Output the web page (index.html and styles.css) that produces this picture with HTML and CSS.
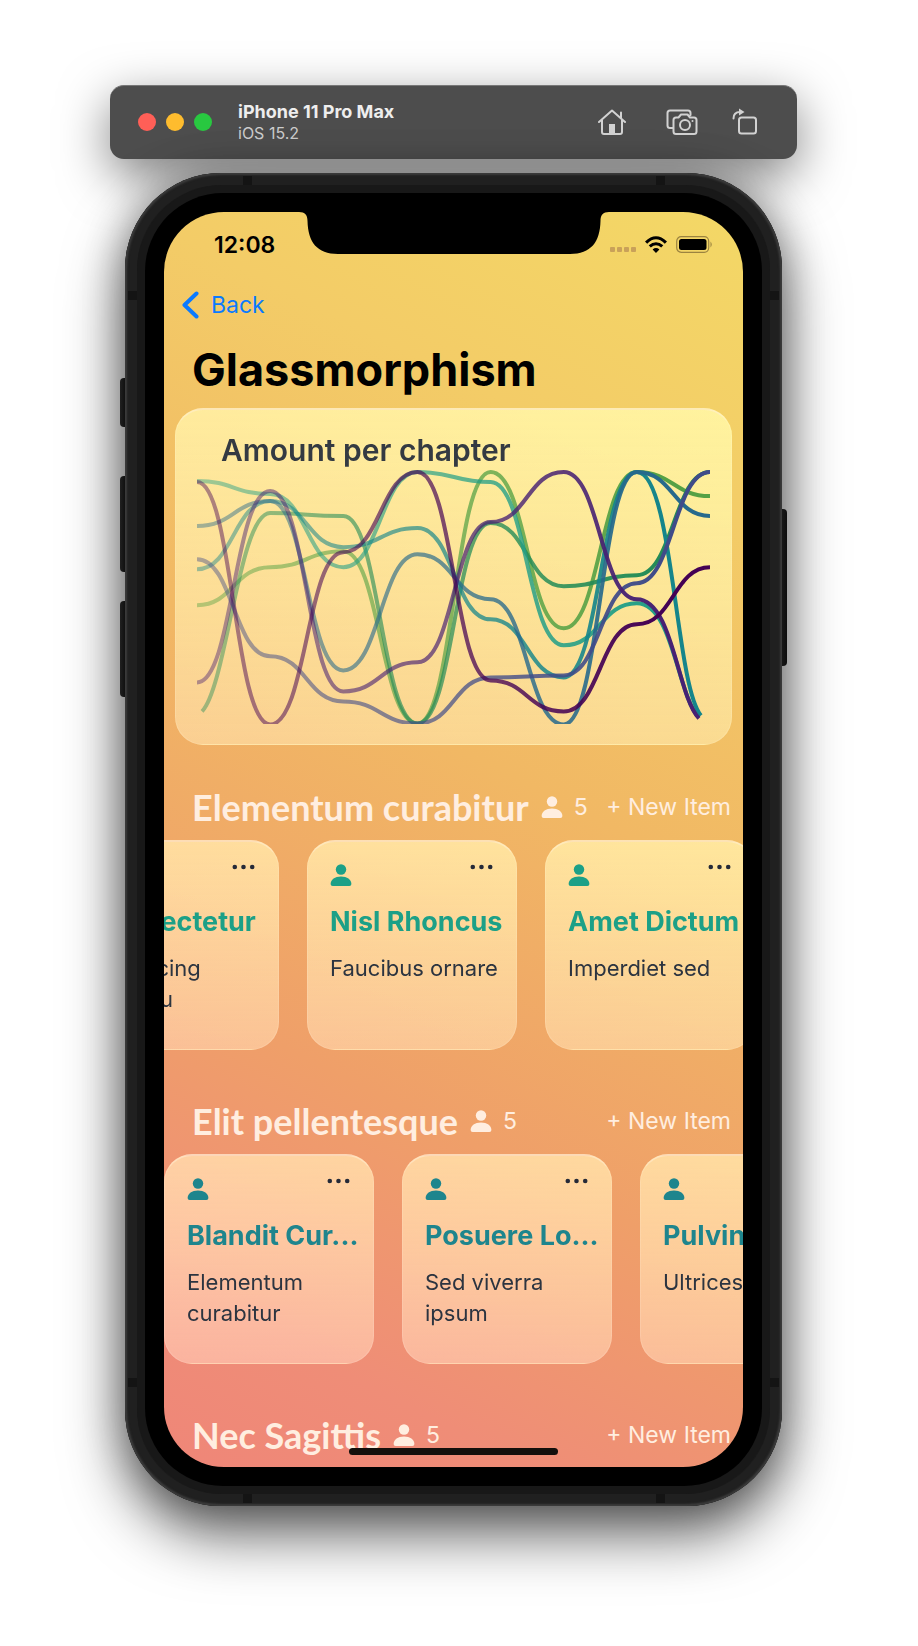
FILE: index.html
```html
<!DOCTYPE html>
<html lang="en">
<head>
<meta charset="utf-8">
<meta name="viewport" content="width=device-width, initial-scale=1">
<title>Glassmorphism</title>
<link rel="stylesheet" href="styles.css">
</head>
<body>
<svg class="defs" aria-hidden="true">
  <symbol id="person" viewBox="0 0 22 22"><circle cx="11" cy="5.5" r="5.2"/><path d="M.6 20C.6 15.5 5 12.4 11 12.4S21.4 15.5 21.4 20Q21.4 22 19.400 22H2.600Q.6 22 .6 20Z"/></symbol>
  <symbol id="dots" viewBox="0 0 23 6"><circle cx="2.800" cy="3" r="2.300"/><circle cx="11.500" cy="3" r="2.300"/><circle cx="20.200" cy="3" r="2.300"/></symbol>
</svg>
<main class="stage">
  <header class="toolbar">
    <div class="lights">
      <button class="light close" aria-label="Close"></button>
      <button class="light minimise" aria-label="Minimise"></button>
      <button class="light expand" aria-label="Zoom"></button>
    </div>
    <div class="device">
      <strong class="device-name">iPhone 11 Pro Max</strong>
      <span class="device-os">iOS 15.2</span>
    </div>
    <div class="tools">
      <button class="tool" aria-label="Home"><svg width="34" height="28" viewBox="2 0 34 28"><path d="M3 14L16 2.500 29 14M6 12V24Q6 26 8 26H24Q26 26 26 24V12M25 10V4.500"/><path class="solid" d="M13 26V16H19V26Z"/></svg></button>
      <button class="tool" aria-label="Screenshot"><svg width="32" height="28" viewBox="0 0 32 28"><path d="M6.500 20H4Q1.500 20 1.500 17.500V5Q1.500 2.500 4 2.500H22Q24.500 2.500 24.500 5V7M7.500 12Q7.500 9.500 10 9.500H12.500L15 6.500H21.500L24 9.500H28Q30.500 9.500 30.500 12V23.500Q30.500 26 28 26H10Q7.500 26 7.500 23.500Z"/><circle cx="19" cy="17" r="5"/><circle class="solid" cx="26.500" cy="13" r="1"/></svg></button>
      <button class="tool" aria-label="Rotate"><svg width="26" height="28" viewBox="3 0 26 28"><rect x="10" y="9.500" width="17" height="16" rx="2.500"/><path d="M4.500 10.500Q4.500 4 11 4"/><path class="solid" d="M10 .5L15.500 4 10 7.500Z"/></svg></button>
    </div>
  </header>

  <div class="phone">
    <i class="key mute"></i><i class="key volume-up"></i><i class="key volume-down"></i><i class="key power"></i>
    <i class="band-v"></i><i class="band-h"></i>
    <div class="bezel">
      <div class="screen">
        <svg class="notch" viewBox="0 0 310 43" aria-hidden="true"><path d="M0 0C6 0 8.500 3 8.500 9C9 30 18 42 39 42H271C292 42 301 30 301.500 9C301.500 3 304 0 310 0Z"/></svg>
        <div class="status">
          <time class="clock">12:08</time>
          <div class="status-icons">
            <svg width="26" height="6" viewBox="0 0 26 6"><g fill="#c9a159"><rect width="5" height="5" rx="1"/><rect x="7" width="5" height="5" rx="1"/><rect x="14" width="5" height="5" rx="1"/><rect x="21" width="5" height="5" rx="1"/></g></svg>
            <svg width="22" height="17" viewBox="0 0 22 17"><path d="M11 17L7.600 13.400Q11 10.800 14.400 13.400ZM5.800 11.500L3.700 9.300Q11 3 18.300 9.300L16.200 11.500Q11 7 5.800 11.500ZM2.200 7.700L0 5.500Q11-5 22 5.500L19.800 7.700Q11-1 2.200 7.700Z"/></svg>
            <svg width="37" height="17" viewBox="0 0 37 17"><rect x=".7" y=".7" width="32" height="15.600" rx="4.500" fill="none" stroke="#9b8340" stroke-width="1.200"/><rect x="3" y="3" width="27.500" height="11" rx="2.500"/><path d="M34.500 5.500Q37 8.500 34.500 11.500Z" fill="#9b8340"/></svg>
          </div>
        </div>
        <nav class="nav"><a class="back" href="#"><svg width="17" height="28" viewBox="0 0 17 28"><path d="M14.500 2.500L2.500 14 14.500 25.500"/></svg>Back</a></nav>
        <h1 class="title">Glassmorphism</h1>

        <section class="glass chart-card">
          <h2 class="chart-title">Amount per chapter</h2>
          <svg class="chart" viewBox="0 0 512 255" role="img" aria-label="Amount per chapter">
            <defs>
              <linearGradient id="ramp"><stop offset="0" stop-color="#fff" stop-opacity=".42"/><stop offset=".5" stop-color="#fff" stop-opacity=".7"/><stop offset=".9" stop-color="#fff"/></linearGradient>
              <mask id="fade" maskUnits="userSpaceOnUse" x="0" y="-10" width="512" height="265"><rect y="-10" width="512" height="265" fill="url(#ramp)"/></mask>
            </defs>
            <path stroke="#55a145" d="M0 136C36 136 37 98 73 98S110 82 146 82 184 254 220 254 257 3 293 3 330 159 366 159 403 3 439 3 476 27 512 27"/>
            <path stroke="#238b57" d="M5 242C30 215 42 44 73 44S110 47 146 47 184 254 220 254 257 54 293 54 330 117 366 117 403 106 439 106 476 3 512 3"/>
            <path stroke="#219e87" d="M0 12C36 12 37 25 73 25S110 98 146 98 184 3 220 3 257 13 293 13 330 176 366 176 403 134 439 134 479 225 501 248"/>
            <path stroke="#15858b" d="M0 100C36 100 37 32 73 32S110 78 146 78 184 59 220 59 257 150 293 150 330 208 366 208 403 3 439 3 477 215 503 246"/>
            <path stroke="#27698c" d="M0 57C36 57 37 32 73 32S110 201 146 201 184 85 220 85 257 130 293 130 330 255 366 255 403 3 439 3 476 47 512 47"/>
            <path stroke="#404b89" d="M0 90C36 90 37 187 73 187S110 232 146 232 184 254 220 254 257 208 293 208 330 206 366 206 403 114 439 114 476 3 512 3"/>
            <path stroke="#482173" d="M0 213C36 213 37 22 73 22S110 222 146 222 184 193 220 193 257 53 293 53 330 3 366 3 403 130 439 130 479 226 501 249"/>
            <path stroke="#440154" d="M0 13C36 13 37 255 73 255S110 83 146 83 184 3 220 3 257 211 293 211 330 242 366 242 403 155 439 155 476 98 512 98"/>
          </svg>
        </section>

        <div class="sections">
          <section>
            <header class="section-head"><h2 class="script">Elementum curabitur</h2><span class="count"><svg class="person"><use href="#person"/></svg>5</span><button class="new">+ New Item</button></header>
            <div class="row scrolled green">
              <article class="glass card"><div class="card-top"><svg class="person"><use href="#person"/></svg><button class="more" aria-label="More"><svg><use href="#dots"/></svg></button></div><h3 class="card-title">Consectetur</h3><p class="card-text">Adipiscing<br>nulla eu</p></article>
              <article class="glass card"><div class="card-top"><svg class="person"><use href="#person"/></svg><button class="more" aria-label="More"><svg><use href="#dots"/></svg></button></div><h3 class="card-title">Nisl Rhoncus</h3><p class="card-text">Faucibus ornare</p></article>
              <article class="glass card"><div class="card-top"><svg class="person"><use href="#person"/></svg><button class="more" aria-label="More"><svg><use href="#dots"/></svg></button></div><h3 class="card-title">Amet Dictum</h3><p class="card-text">Imperdiet sed</p></article>
            </div>
          </section>
          <section>
            <header class="section-head"><h2 class="script">Elit pellentesque</h2><span class="count"><svg class="person"><use href="#person"/></svg>5</span><button class="new">+ New Item</button></header>
            <div class="row teal">
              <article class="glass card"><div class="card-top"><svg class="person"><use href="#person"/></svg><button class="more" aria-label="More"><svg><use href="#dots"/></svg></button></div><h3 class="card-title">Blandit Cur...</h3><p class="card-text">Elementum curabitur</p></article>
              <article class="glass card"><div class="card-top"><svg class="person"><use href="#person"/></svg><button class="more" aria-label="More"><svg><use href="#dots"/></svg></button></div><h3 class="card-title">Posuere Lo...</h3><p class="card-text">Sed viverra ipsum</p></article>
              <article class="glass card"><div class="card-top"><svg class="person"><use href="#person"/></svg><button class="more" aria-label="More"><svg><use href="#dots"/></svg></button></div><h3 class="card-title">Pulvinar</h3><p class="card-text">Ultrices</p></article>
            </div>
          </section>
          <section>
            <header class="section-head"><h2 class="script">Nec Sagittis</h2><span class="count"><svg class="person"><use href="#person"/></svg>5</span><button class="new">+ New Item</button></header>
          </section>
        </div>
        <div class="home-bar"></div>
      </div>
    </div>
  </div>
</main>
</body>
</html>
```

FILE: styles.css
```css
* { box-sizing: border-box; }
body { margin: 0; background: #fff; font-family: Inter, "Liberation Sans", sans-serif; }
h1, h2, h3, p { margin: 0; }
button { border: 0; padding: 0; background: none; font: inherit; color: inherit; }
svg { display: block; flex: none; }
.defs { width: 0; height: 0; position: absolute; }

.stage { display: flex; flex-direction: column; align-items: center; gap: 14px; padding: 85px 11px 140px 0; }

.toolbar { width: 100%; max-width: 687px; display: flex; align-items: center; padding: 14px 39px 16px 28px; border-radius: 14px; background: #4d4d4d; border-top: 1px solid #777; box-shadow: 0 16px 50px rgba(0,0,0,.5); color: #eee; }
.lights { display: flex; gap: 10px; }
.light { width: 18px; height: 18px; border-radius: 50%; }
.close { background: #ff5f57; }
.minimise { background: #febc2e; }
.expand { background: #28c840; }
.device { display: flex; flex-direction: column; margin-left: 26px; }
.device-name { font-size: 18px; line-height: 23px; }
.device-os { font-size: 16px; line-height: 20px; color: #ccc; }
.tools { display: flex; gap: 34px; margin-left: auto; }
.tool svg { fill: none; stroke: #d2d2d2; stroke-width: 2; stroke-linecap: round; stroke-linejoin: round; }
.tool .solid { fill: #d2d2d2; stroke: none; }

.phone { position: relative; width: 100%; max-width: 657px; padding: 20px; border-radius: 96px; background: #1b1b1b; box-shadow: 0 28px 60px rgba(0,0,0,.62), 0 0 40px rgba(0,0,0,.3), inset 0 0 2px 2px #3c3c3c, inset 0 0 0 12px #202020; }
.bezel { position: relative; padding: 19px; border-radius: 78px; background: #000; box-shadow: 0 0 0 8px #181818; }
.key { position: absolute; width: 7px; background: linear-gradient(90deg, #333, #151515); left: -5px; border-radius: 4px 0 0 4px; z-index: -1; }
.mute { top: 205px; height: 49px; }
.volume-up { top: 303px; height: 96px; }
.volume-down { top: 428px; height: 96px; }
.power { top: 336px; height: 157px; left: auto; right: -5px; border-radius: 0 4px 4px 0; }
.band-v { position: absolute; top: 3px; bottom: 3px; left: 118px; right: 117px; border: solid #141414; border-width: 0 9px; }
.band-h { position: absolute; left: 3px; right: 3px; top: 118px; bottom: 119px; border: solid #141414; border-width: 9px 0; }

.screen { position: relative; aspect-ratio: 579 / 1255; overflow: hidden; border-radius: 60px; background: linear-gradient(207deg, #f3d866 0%, #f3cc67 20%, #f1b864 44%, #ef9f69 69%, #ef8d77 88%, #ef8678 100%); }
.notch { position: absolute; top: 0; left: 135px; width: 310px; }

.status { height: 60px; display: flex; align-items: center; justify-content: space-between; padding: 5px 30px 0 50px; }
.clock { font-size: 23px; line-height: 28px; font-weight: 600; }
.status-icons { display: flex; align-items: flex-end; gap: 9px; }

.nav { height: 66px; display: flex; align-items: center; padding: 0 18px; }
.back { display: flex; align-items: center; gap: 12px; font-size: 23px; line-height: 28px; color: #0a7aff; text-decoration: none; }
.back svg { fill: none; stroke: #0a7aff; stroke-width: 4; stroke-linecap: round; stroke-linejoin: round; }
.title { padding: 0 28px; font-size: 45px; line-height: 64px; margin-bottom: 6px; }

.glass { border-radius: 28px; background: linear-gradient(rgba(255,250,200,.5), rgba(242,224,208,.34)); backdrop-filter: brightness(1.13); border: 1px solid rgba(255,255,255,.12); border-top: 2px solid rgba(255,240,215,.5); }
.chart-card { margin: 0 11px; padding: 22px 21px 20px; }
.chart-title { padding: 0 24px; margin-bottom: 1px; font-size: 30px; line-height: 36px; font-weight: 600; color: #343a42; }
.chart { width: 100%; overflow: hidden; }
.chart path { fill: none; stroke-width: 4; mask: url(#fade); }

.sections { display: flex; flex-direction: column; gap: 37px; margin-top: 28px; }
.section-head { height: 67px; display: flex; align-items: center; padding: 0 12px 0 28px; color: #ffeee0; font-size: 23px; line-height: 28px; }
.script { font-family: "Chalkboard SE", Lato, sans-serif; font-size: 36px; line-height: 48px; font-weight: 700; white-space: nowrap; }
.count { display: flex; align-items: center; gap: 11px; margin-left: 12px; }
.person { width: 22px; height: 22px; fill: currentColor; }
.new { margin-left: auto; white-space: nowrap; }

.row { display: flex; gap: 28px; }
.scrolled { margin-left: -95px; }
.green { color: #1ca087; }
.teal { color: #1e858d; }
.card { flex: none; width: 210px; height: 210px; padding: 22px 10px 20px 22px; }
.card-top { display: flex; justify-content: space-between; height: 22px; margin-bottom: 19px; }
.more { color: #252a38; width: 23px; height: 6px; margin-right: 13px; fill: currentColor; }
.more svg { width: 23px; height: 6px; }
.card-title { font-size: 27px; line-height: 34px; font-weight: 700; white-space: nowrap; margin-bottom: 14px; }
.card-text { font-size: 22px; line-height: 31px; color: #2c3440; }

.home-bar { position: absolute; left: 32%; right: 32%; bottom: 12px; height: 7px; border-radius: 4px; background: #14100c; }
```
